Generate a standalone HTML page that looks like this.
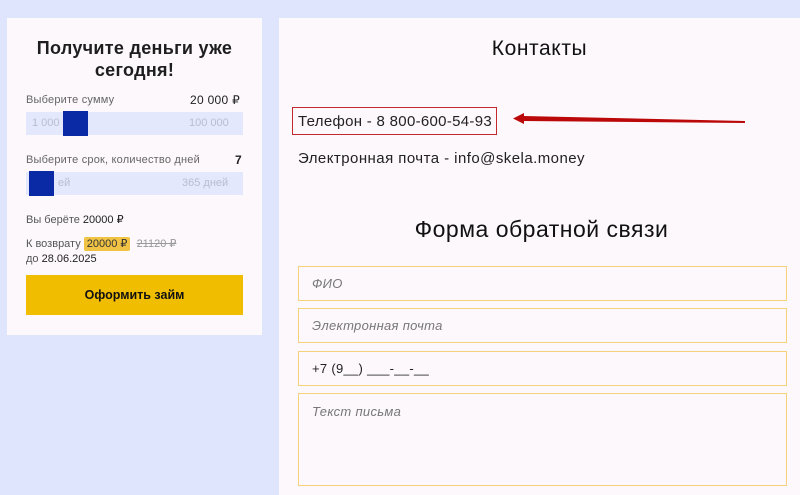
<!DOCTYPE html>
<html><head><meta charset="utf-8"><style>
*{margin:0;padding:0;box-sizing:border-box}
body{width:800px;height:495px;background:#dfe5fd;font-family:"Liberation Sans","Noto Sans CJK SC",sans-serif;position:relative;overflow:hidden;color:#1e1e1e}
.p{position:absolute;background:#fdf8fb}
.a{position:absolute;white-space:nowrap}
.f{position:absolute;left:298px;width:489px;border:1px solid #f7d27c;background:#fdf8fb;font-size:13px;color:#777;font-style:italic;padding-left:13px;letter-spacing:0.3px}
</style></head><body>
<div class="p" style="left:7px;top:18px;width:255px;height:317px"></div>
<div class="p" style="left:279px;top:18px;width:521px;height:477px"></div>

<div class="a" style="left:7px;width:255px;top:37px;text-align:center;font-size:18px;font-weight:bold;line-height:22px;letter-spacing:0.3px">Получите деньги уже<br>сегодня!</div>
<div class="a" style="left:26px;top:94px;font-size:11px;color:#666;letter-spacing:0.2px">Выберите сумму</div>
<div class="a" style="left:190px;top:93px;font-size:12px;color:#222;letter-spacing:0.3px">20 000 ₽</div>
<div class="a" style="left:26px;top:112px;width:217px;height:23px;background:#e3e8fc"></div>
<div class="a" style="left:32px;top:117px;font-size:11px;color:#b8bdd0">1 000</div>
<div class="a" style="left:189px;top:117px;font-size:11px;color:#b8bdd0">100 000</div>
<div class="a" style="left:63px;top:111px;width:25px;height:25px;background:#0a2aa5"></div>

<div class="a" style="left:26px;top:154px;font-size:11px;color:#666;letter-spacing:0.2px">Выберите срок, количество дней</div>
<div class="a" style="left:235px;top:153px;font-size:12px;font-weight:bold;color:#222">7</div>
<div class="a" style="left:26px;top:172px;width:217px;height:23px;background:#e3e8fc"></div>
<div class="a" style="left:58px;top:177px;font-size:11px;color:#b8bdd0">ей</div>
<div class="a" style="left:182px;top:177px;font-size:11px;color:#b8bdd0">365 дней</div>
<div class="a" style="left:29px;top:171px;width:25px;height:25px;background:#0a2aa5"></div>

<div class="a" style="left:26px;top:213px;font-size:11px;color:#555">Вы берёте <span style="color:#222">20000 ₽</span></div>
<div class="a" style="left:26px;top:237px;font-size:11px;color:#555">К возврату <span style="background:#f1c344;color:#333;padding:1px 3px;border-radius:2px">20000 ₽</span> &nbsp;<s style="color:#999">21120 ₽</s></div>
<div class="a" style="left:26px;top:253px;font-size:11px;color:#555">до <span style="color:#222">28.06.2025</span></div>
<div class="a" style="left:26px;top:275px;width:217px;height:40px;background:#f1bd00;text-align:center;line-height:40px;font-size:12.5px;font-weight:bold;color:#111">Оформить займ</div>

<div class="a" style="left:279px;width:521px;top:37px;text-align:center;font-size:21px;color:#111;letter-spacing:0.6px">Контакты</div>
<div class="a" style="left:292px;top:107px;width:205px;height:28px;border:1px solid #c3282d"></div>
<div class="a" style="left:298px;top:113px;font-size:15px;color:#222;letter-spacing:0.3px">Телефон - 8 800-600-54-93</div>
<svg class="a" style="left:505px;top:108px" width="250" height="22"><path d="M18 8 L240 13 L240 15 L18 13 Z" fill="#bb0808"/><path d="M8 10.5 L19 5 L19 16 Z" fill="#bb0808"/></svg>
<div class="a" style="left:298px;top:150px;font-size:15px;color:#222;letter-spacing:0.45px">Электронная почта - info@skela.money</div>
<div class="a" style="left:279px;width:521px;top:216px;text-align:center;font-size:23px;color:#111;padding-left:4px;letter-spacing:0.5px">Форма обратной связи</div>

<div class="f" style="top:266px;height:35px;line-height:33px">ФИО</div>
<div class="f" style="top:308px;height:35px;line-height:33px">Электронная почта</div>
<div class="f" style="top:351px;height:35px;line-height:33px;font-style:normal;color:#222">+7 (9__) ___-__-__</div>
<div class="f" style="top:393px;height:93px;padding-top:10px">Текст письма</div>
</body></html>
